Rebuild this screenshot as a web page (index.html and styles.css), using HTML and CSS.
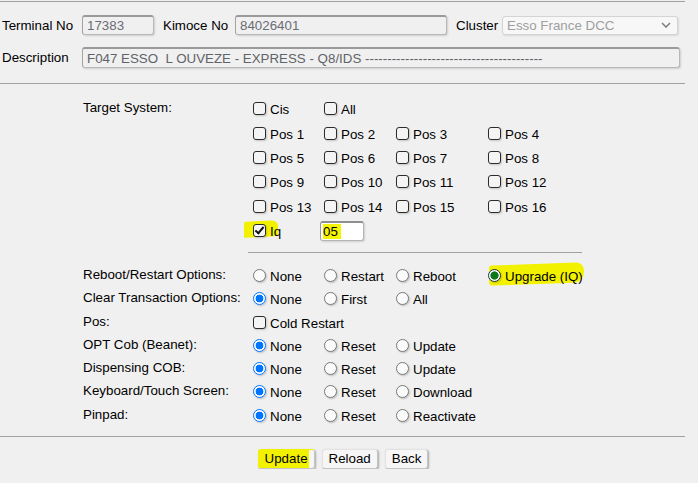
FILE: index.html
```html
<!DOCTYPE html>
<html>
<head>
<meta charset="utf-8">
<link rel="stylesheet" href="styles.css">
</head>
<body>
<div class="page">
  <div class="rule"></div>
  <div class="hdr r1">
    <span class="hl l-term">Terminal No</span>
    <input class="ro w-term" value="17383" readonly>
    <span class="hl l-kim">Kimoce No</span>
    <input class="ro w-kim" value="84026401" readonly>
    <span class="hl l-clu">Cluster</span>
    <div class="sel"><span>Esso France DCC</span><svg width="10" height="6" viewBox="0 0 10 6"><path d="M1 1 L5 5 L9 1" fill="none" stroke="#808080" stroke-width="1.6"/></svg></div>
  </div>
  <div class="hdr r2">
    <span class="hl l-term">Description</span>
    <input class="ro w-desc" value="F047 ESSO  L OUVEZE - EXPRESS - Q8/IDS ----------------------------------------" readonly>
  </div>
  <div class="rule r-mid"></div>

  <div class="grid target">
    <div class="lbl span6">Target System:</div>
    <label class="opt"><input type="checkbox" class="cb"><span>Cis</span></label>
    <label class="opt"><input type="checkbox" class="cb"><span>All</span></label>
    <div></div><div></div>
    <label class="opt c2"><input type="checkbox" class="cb"><span>Pos 1</span></label>
    <label class="opt"><input type="checkbox" class="cb"><span>Pos 2</span></label>
    <label class="opt"><input type="checkbox" class="cb"><span>Pos 3</span></label>
    <label class="opt"><input type="checkbox" class="cb"><span>Pos 4</span></label>
    <label class="opt c2"><input type="checkbox" class="cb"><span>Pos 5</span></label>
    <label class="opt"><input type="checkbox" class="cb"><span>Pos 6</span></label>
    <label class="opt"><input type="checkbox" class="cb"><span>Pos 7</span></label>
    <label class="opt"><input type="checkbox" class="cb"><span>Pos 8</span></label>
    <label class="opt c2"><input type="checkbox" class="cb"><span>Pos 9</span></label>
    <label class="opt"><input type="checkbox" class="cb"><span>Pos 10</span></label>
    <label class="opt"><input type="checkbox" class="cb"><span>Pos 11</span></label>
    <label class="opt"><input type="checkbox" class="cb"><span>Pos 12</span></label>
    <label class="opt c2"><input type="checkbox" class="cb"><span>Pos 13</span></label>
    <label class="opt"><input type="checkbox" class="cb"><span>Pos 14</span></label>
    <label class="opt"><input type="checkbox" class="cb"><span>Pos 15</span></label>
    <label class="opt"><input type="checkbox" class="cb"><span>Pos 16</span></label>
    <label class="opt c2 hi-iq"><input type="checkbox" class="cb" checked><span>Iq</span></label>
    <div class="opt"><input class="iq" value="05"></div>
  </div>

  <div class="sep"></div>

  <div class="grid options">
    <div class="lbl">Reboot/Restart Options:</div>
    <label class="opt"><input type="radio" name="rb" class="rd"><span>None</span></label>
    <label class="opt"><input type="radio" name="rb" class="rd"><span>Restart</span></label>
    <label class="opt"><input type="radio" name="rb" class="rd"><span>Reboot</span></label>
    <label class="opt hi-up"><input type="radio" name="rb" class="rd green" checked><span>Upgrade (IQ)</span></label>

    <div class="lbl">Clear Transaction Options:</div>
    <label class="opt"><input type="radio" name="ct" class="rd" checked><span>None</span></label>
    <label class="opt"><input type="radio" name="ct" class="rd"><span>First</span></label>
    <label class="opt"><input type="radio" name="ct" class="rd"><span>All</span></label>
    <div></div>

    <div class="lbl">Pos:</div>
    <label class="opt span-rest"><input type="checkbox" class="cb"><span>Cold Restart</span></label>

    <div class="lbl">OPT Cob (Beanet):</div>
    <label class="opt"><input type="radio" name="oc" class="rd" checked><span>None</span></label>
    <label class="opt"><input type="radio" name="oc" class="rd"><span>Reset</span></label>
    <label class="opt"><input type="radio" name="oc" class="rd"><span>Update</span></label>
    <div></div>

    <div class="lbl">Dispensing COB:</div>
    <label class="opt"><input type="radio" name="dc" class="rd" checked><span>None</span></label>
    <label class="opt"><input type="radio" name="dc" class="rd"><span>Reset</span></label>
    <label class="opt"><input type="radio" name="dc" class="rd"><span>Update</span></label>
    <div></div>

    <div class="lbl">Keyboard/Touch Screen:</div>
    <label class="opt"><input type="radio" name="kb" class="rd" checked><span>None</span></label>
    <label class="opt"><input type="radio" name="kb" class="rd"><span>Reset</span></label>
    <label class="opt"><input type="radio" name="kb" class="rd"><span>Download</span></label>
    <div></div>

    <div class="lbl">Pinpad:</div>
    <label class="opt"><input type="radio" name="pp" class="rd" checked><span>None</span></label>
    <label class="opt"><input type="radio" name="pp" class="rd"><span>Reset</span></label>
    <label class="opt"><input type="radio" name="pp" class="rd"><span>Reactivate</span></label>
    <div></div>
  </div>

  <div class="rule r-bot"></div>
  <div class="buttons">
    <button class="btn hl-btn">Update</button>
    <button class="btn">Reload</button>
    <button class="btn">Back</button>
  </div>
</div>
</body>
</html>
```
FILE: styles.css
```css
html, body {
  margin: 0;
  padding: 0;
  background: #f0f0f0;
}
body {
  font-family: "Liberation Sans", Arial, sans-serif;
  font-size: 13.33px;
  color: #000;
}
.page {
  width: 686px;
  padding-top: 1px;
}
.rule {
  height: 1px;
  width: 685px;
  background: #a0a0a0;
}
.r-mid { margin-top: 15px; }
.r-bot { margin-top: 9px; }

.hdr {
  display: flex;
  align-items: center;
  padding-left: 2px;
}
.r1 { margin-top: 13px; height: 20px; }
.r2 { margin-top: 12px; height: 21px; }
.hl { display: inline-block; }
.l-term { width: 80px; }
.l-kim { width: 72px; margin-left: 9px; }
.l-clu { width: 46px; margin-left: 9px; }

.ro {
  box-sizing: border-box;
  height: 20px;
  margin: 0;
  padding: 0 4px;
  font-family: "Liberation Sans", Arial, sans-serif;
  font-size: 13.33px;
  color: #6a6d73;
  background: #f0f0f0;
  border: 1px solid #b8b8b8;
  border-top: 2px solid #9a9a9a;
  border-left-color: #a4a4a4;
  border-radius: 3px;
  box-shadow: 1px 1px 2px rgba(0,0,0,0.14);
  outline: none;
  white-space: pre;
}
.w-term { width: 72px; }
.w-kim { width: 212px; }
.w-desc { width: 598px; height: 21px; color: #5f6368; }

.sel {
  box-sizing: border-box;
  width: 176px;
  height: 19px;
  display: flex;
  align-items: center;
  justify-content: space-between;
  padding: 0 6px 0 4px;
  background: #f7f7f7;
  border: 1px solid #d4d4d4;
  border-radius: 3px;
  color: #9e9e9e;
  box-shadow: 1px 1px 2px rgba(0,0,0,0.1);
}

.grid {
  display: grid;
  grid-template-columns: 170px 71px 72px 92px auto;
  padding-left: 83px;
}
.target {
  margin-top: 12.5px;
  grid-auto-rows: 24.4px;
}
.options {
  margin-top: 10.5px;
  grid-auto-rows: 23.3px;
}
.lbl {
  align-self: center;
  padding-bottom: 2px;
  white-space: nowrap;
}
.target .lbl {
  align-self: start;
  padding-top: 3px;
  padding-bottom: 0;
}
.span6 { grid-row: span 6; }
.c2 { grid-column: 2; }
.span-rest { grid-column: 2 / -1; }

.opt {
  position: relative;
  display: flex;
  align-items: center;
  white-space: nowrap;
}
.opt span {
  margin-left: 4px;
  padding-top: 2px;
  position: relative;
}

.cb, .rd {
  appearance: none;
  -webkit-appearance: none;
  margin: 0;
  width: 13px;
  height: 13px;
  box-sizing: border-box;
  flex: none;
  position: relative;
}
.cb {
  border: 1.5px solid #2b2b2b;
  border-radius: 3px;
  background: #f4f4f4;
  box-shadow: 1px 1px 2px rgba(0,0,0,0.18);
}
.cb:checked {
  background: #f6f6f6;
}
.cb:checked::after {
  content: "";
  position: absolute;
  left: 3px;
  top: 0px;
  width: 3px;
  height: 7px;
  border-right: 2px solid #111;
  border-bottom: 2px solid #111;
  transform: rotate(40deg);
}
.rd {
  border: 1px solid #7a7a7a;
  border-radius: 50%;
  background: #fbfbfb;
  box-shadow: 1px 1px 2px rgba(0,0,0,0.2);
}
.rd:checked {
  border-color: #0075ff;
  background: radial-gradient(circle, #0075ff 0 3.6px, #ffffff 4.2px);
}
.rd.green:checked {
  border-color: #1c2f5a;
  background: radial-gradient(circle, #0b7a16 0 3.8px, #ffffff 4.4px);
}

.iq {
  box-sizing: border-box;
  width: 44px;
  height: 20px;
  margin: 0 0 0 -4px;
  padding: 0 0 0 2px;
  font-family: "Liberation Sans", Arial, sans-serif;
  font-size: 13.33px;
  color: #000;
  border: 1px solid #b5b5b5;
  border-top: 2px solid #8f8f8f;
  border-left-color: #9a9a9a;
  border-radius: 3px;
  background: linear-gradient(to right, #f5f500 0 18px, #ffffff 18px) no-repeat 2px 1px / 100% 15px, #fff;
  box-shadow: 1px 1px 2px rgba(0,0,0,0.14);
  outline: none;
}

.hi-iq::before {
  content: "";
  position: absolute;
  left: -9px;
  top: 3px;
  width: 34px;
  height: 16px;
  background: #f2f200;
  transform: skewY(-3deg);
  border-radius: 2px 6px 3px 1px;
}
.hi-up::before {
  content: "";
  position: absolute;
  left: 1px;
  top: 0px;
  width: 95px;
  height: 20px;
  background: #f2f200;
  border-radius: 3px 8px 10px 4px;
  transform: skewY(-2deg);
}

.sep {
  margin-top: 9.5px;
  margin-left: 248px;
  width: 334px;
  height: 1px;
  background: #a0a0a0;
}

.buttons {
  margin-top: 12px;
  display: flex;
  justify-content: center;
  gap: 7px;
  width: 686px;
}
.btn {
  box-sizing: border-box;
  height: 20px;
  margin: 0;
  padding: 0 6px;
  font-family: "Liberation Sans", Arial, sans-serif;
  font-size: 13.33px;
  color: #000;
  background: #f6f6f6;
  border: 1px solid #e2e2e2;
  border-right-color: #c4c4c4;
  border-bottom-color: #c4c4c4;
  border-radius: 3px;
  box-shadow: 1px 1px 2px rgba(0,0,0,0.3);
}
.hl-btn {
  background: linear-gradient(to right, #f2f200 0 50px, #f6f6f6 50px);
  border-left-color: #f2f200;
  border-top-color: #f2f200;
}
```
